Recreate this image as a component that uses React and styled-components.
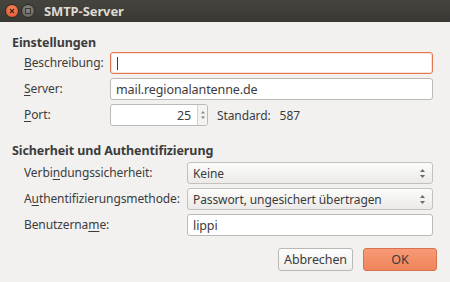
import React from 'react';
import styled, { createGlobalStyle } from 'styled-components';

const GlobalStyle = createGlobalStyle`
  html, body {
    margin: 0;
    padding: 0;
    background: #f2f1f0;
  }
  body {
    font-family: "Noto Sans", "DejaVu Sans", sans-serif;
    font-size: 12px;
    letter-spacing: -0.1px;
    color: #3c3c3c;
  }
`;

const Window = styled.div`
  width: 450px;
  height: 282px;
  background: #f2f1f0;
  display: flex;
  flex-direction: column;
  overflow: hidden;
`;

const TitleBar = styled.div`
  height: 22px;
  flex: none;
  display: flex;
  align-items: center;
  padding-left: 5px;
  background: linear-gradient(#45443f, #393834);
  color: #dfdbd2;
  font-weight: bold;
  font-size: 13px;
`;

const WinButton = styled.div`
  width: 14px;
  height: 14px;
  border-radius: 50%;
  margin-right: 2px;
  display: flex;
  align-items: center;
  justify-content: center;
  background: ${p => p.close
    ? 'radial-gradient(circle at 50% 35%, #f58a5c, #e0502a)'
    : 'radial-gradient(circle at 50% 35%, #8a8983, #5c5b57)'};
  border: 1px solid #2a2926;
  box-sizing: border-box;
`;

const Title = styled.span`
  margin-left: 7px;
`;

const Content = styled.div`
  flex: 1;
  display: flex;
  flex-direction: column;
  padding: 12px 17px 0 12px;
`;

const SectionTitle = styled.div`
  font-weight: bold;
  font-size: 12.5px;
  height: 17px;
  line-height: 17px;
  margin-top: ${p => p.top || '0'};
  margin-bottom: ${p => p.bottom || '1px'};
`;

const FormGrid = styled.div`
  display: grid;
  grid-template-columns: ${p => p.labelWidth} 1fr;
  row-gap: ${p => p.gap || '4px'};
  padding-left: 12px;
  align-items: center;
`;

const Label = styled.label`
  line-height: 22px;
  white-space: nowrap;
`;

const Mn = styled.span`
  text-decoration: underline;
  text-underline-offset: 2px;
`;

const Entry = styled.div`
  height: 22px;
  box-sizing: border-box;
  border: 1px solid ${p => p.focus ? '#e0774e' : '#bcbab6'};
  box-shadow: ${p => p.focus ? 'inset 0 0 0 1px rgba(240,140,100,0.25)' : 'none'};
  border-radius: 3px;
  background: #fff;
  display: flex;
  align-items: center;
  padding: 0 5px;
  font-size: 12.5px;
`;

const Cursor = styled.span`
  width: 1px;
  height: 13px;
  background: #3c3c3c;
  margin-left: 1px;
`;

const PortRow = styled.div`
  display: flex;
  align-items: center;
`;

const SpinEntry = styled.div`
  width: 98px;
  height: 22px;
  box-sizing: border-box;
  border: 1px solid #bcbab6;
  border-radius: 3px;
  background: #fff;
  display: flex;
  font-size: 12.5px;
`;

const SpinValue = styled.div`
  flex: 1;
  display: flex;
  align-items: center;
  justify-content: flex-end;
  padding-right: 6px;
`;

const SpinButtons = styled.div`
  width: 9px;
  border-left: 1px solid #d3d1cd;
  background: #f4f3f2;
  border-radius: 0 2px 2px 0;
  display: flex;
  align-items: center;
  justify-content: center;
`;

const Standard = styled.span`
  margin-left: 9px;
  word-spacing: 6px;
`;

const Combo = styled.div`
  height: 22px;
  box-sizing: border-box;
  border: 1px solid #c3c1bd;
  border-radius: 3px;
  background: linear-gradient(#fcfcfb, #ebeae8);
  display: flex;
  align-items: center;
  justify-content: space-between;
  padding: 0 6px 0 5px;
`;

const Buttons = styled.div`
  margin-top: auto;
  margin-bottom: 11px;
  margin-right: -4px;
  display: flex;
  justify-content: flex-end;
  gap: 10px;
`;

const Button = styled.div`
  width: ${p => p.width || '74px'};
  height: 23px;
  box-sizing: border-box;
  border-radius: 3px;
  display: flex;
  align-items: center;
  justify-content: center;
  font-size: 12.5px;
  border: 1px solid ${p => p.primary ? '#d7734c' : '#bbb9b5'};
  background: ${p => p.primary
    ? 'linear-gradient(#f79a76, #ef845a)'
    : 'linear-gradient(#fdfdfd, #efeeec)'};
  color: #3c3c3c;
`;

const Arrows = () => (
  <svg width="7" height="11" viewBox="0 0 7 11">
    <path d="M3.5 1 L6 4 L1 4 Z" fill="#6b6a66" />
    <path d="M3.5 10 L6 7 L1 7 Z" fill="#6b6a66" />
  </svg>
);

const SmallArrows = () => (
  <svg width="6" height="12" viewBox="0 0 6 12">
    <path d="M3 2 L5 4.5 L1 4.5 Z" fill="#8a8985" />
    <path d="M3 10 L5 7.5 L1 7.5 Z" fill="#8a8985" />
  </svg>
);

export default function App() {
  return (
    <Window>
      <GlobalStyle />
      <TitleBar>
        <WinButton close>
          <svg width="6" height="6" viewBox="0 0 6 6">
            <path d="M1 1 L5 5 M5 1 L1 5" stroke="#4a2015" strokeWidth="1.3" />
          </svg>
        </WinButton>
        <WinButton>
          <svg width="6" height="6" viewBox="0 0 6 6">
            <rect x="0.5" y="0.5" width="5" height="5" fill="none" stroke="#3a3936" />
          </svg>
        </WinButton>
        <Title>SMTP-Server</Title>
      </TitleBar>
      <Content>
        <SectionTitle>Einstellungen</SectionTitle>
        <FormGrid labelWidth="86px">
          <Label><Mn>B</Mn>eschreibung:</Label>
          <Entry focus><Cursor /></Entry>
          <Label><Mn>S</Mn>erver:</Label>
          <Entry>mail.regionalantenne.de</Entry>
          <Label><Mn>P</Mn>ort:</Label>
          <PortRow>
            <SpinEntry>
              <SpinValue>25</SpinValue>
              <SpinButtons><SmallArrows /></SpinButtons>
            </SpinEntry>
            <Standard>Standard: 587</Standard>
          </PortRow>
        </FormGrid>
        <SectionTitle top="16px" bottom="3px">Sicherheit und Authentifizierung</SectionTitle>
        <FormGrid labelWidth="163px" gap="4px">
          <Label>Verbi<Mn>n</Mn>dungssicherheit:</Label>
          <Combo>Keine<Arrows /></Combo>
          <Label>A<Mn>u</Mn>thentifizierungsmethode:</Label>
          <Combo>Passwort, ungesichert übertragen<Arrows /></Combo>
          <Label>Benutzerna<Mn>m</Mn>e:</Label>
          <Entry>lippi</Entry>
        </FormGrid>
        <Buttons>
          <Button width="75px">Abbrechen</Button>
          <Button primary>OK</Button>
        </Buttons>
      </Content>
    </Window>
  );
}
